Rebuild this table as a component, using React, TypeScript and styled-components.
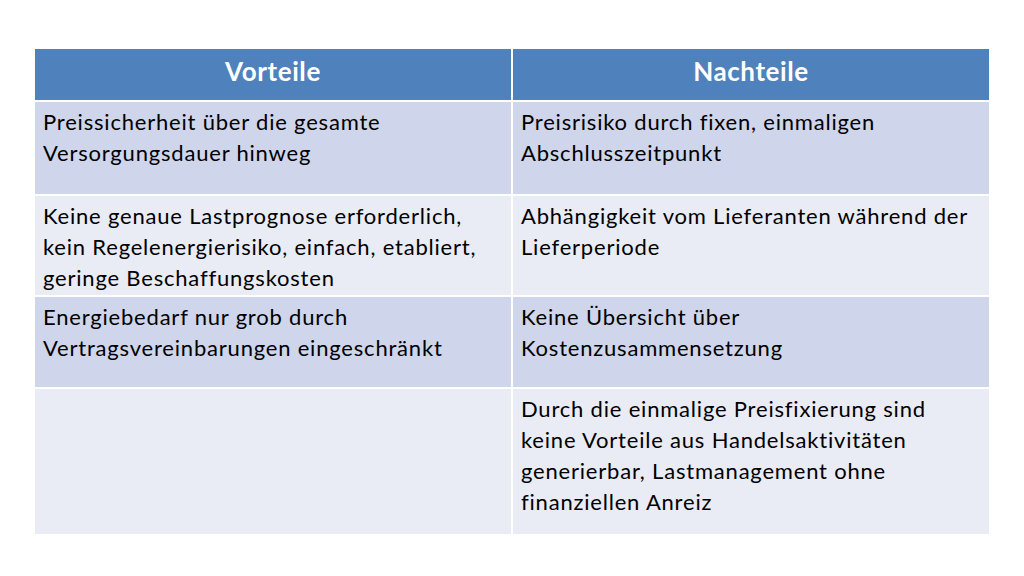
import React from 'react';
import styled, { createGlobalStyle } from 'styled-components';

const GlobalStyle = createGlobalStyle`
  html, body {
    margin: 0;
    padding: 0;
    background: #ffffff;
  }
  body {
    font-family: Lato, "Open Sans", "Liberation Sans", sans-serif;
  }
`;

const Slide = styled.div`
  width: 1024px;
  height: 576px;
  box-sizing: border-box;
  padding: 49px 35px 0 35px;
  background: #ffffff;
`;

const Table = styled.div`
  display: grid;
  grid-template-columns: 476px 476px;
  column-gap: 2px;
  row-gap: 2px;
  width: 954px;
`;

const HeadCell = styled.div`
  height: 51px;
  background: #4f81bd;
  color: #ffffff;
  font-weight: 700;
  font-size: 26px;
  letter-spacing: 0.6px;
  display: flex;
  align-items: center;
  justify-content: center;
  padding-bottom: 8px;
  box-sizing: border-box;
`;

const Cell = styled.div<{ $shade: 'dark' | 'light'; $height: number }>`
  height: ${({ $height }) => $height}px;
  box-sizing: border-box;
  padding: 4px 8px 0 8px;
  background: ${({ $shade }) => ($shade === 'dark' ? '#cfd5ea' : '#e9ebf5')};
  color: #000000;
  font-size: 22px;
  letter-spacing: 0.8px;
  line-height: 31px;
`;

const rows: { left: string[]; right: string[]; height: number }[] = [
  {
    left: ['Preissicherheit über die gesamte', 'Versorgungsdauer hinweg'],
    right: ['Preisrisiko durch fixen, einmaligen', 'Abschlusszeitpunkt'],
    height: 92,
  },
  {
    left: [
      'Keine genaue Lastprognose erforderlich,',
      'kein Regelenergierisiko, einfach, etabliert,',
      'geringe Beschaffungskosten',
    ],
    right: ['Abhängigkeit vom Lieferanten während der', 'Lieferperiode'],
    height: 99,
  },
  {
    left: ['Energiebedarf nur grob durch', 'Vertragsvereinbarungen eingeschränkt'],
    right: ['Keine Übersicht über', 'Kostenzusammensetzung'],
    height: 90,
  },
  {
    left: [],
    right: [
      'Durch die einmalige Preisfixierung sind',
      'keine Vorteile aus Handelsaktivitäten',
      'generierbar, Lastmanagement ohne',
      'finanziellen Anreiz',
    ],
    height: 145,
  },
];

const Lines: React.FC<{ lines: string[] }> = ({ lines }) => (
  <>
    {lines.map((l, i) => (
      <div key={i}>{l}</div>
    ))}
  </>
);

const App: React.FC = () => {
  return (
    <>
      <GlobalStyle />
      <Slide>
        <Table>
          <HeadCell>Vorteile</HeadCell>
          <HeadCell>Nachteile</HeadCell>
          {rows.map((r, i) => {
            const shade = i % 2 === 0 ? 'dark' : 'light';
            return (
              <React.Fragment key={i}>
                <Cell $shade={shade} $height={r.height}>
                  <Lines lines={r.left} />
                </Cell>
                <Cell $shade={shade} $height={r.height}>
                  <Lines lines={r.right} />
                </Cell>
              </React.Fragment>
            );
          })}
        </Table>
      </Slide>
    </>
  );
};

export default App;
